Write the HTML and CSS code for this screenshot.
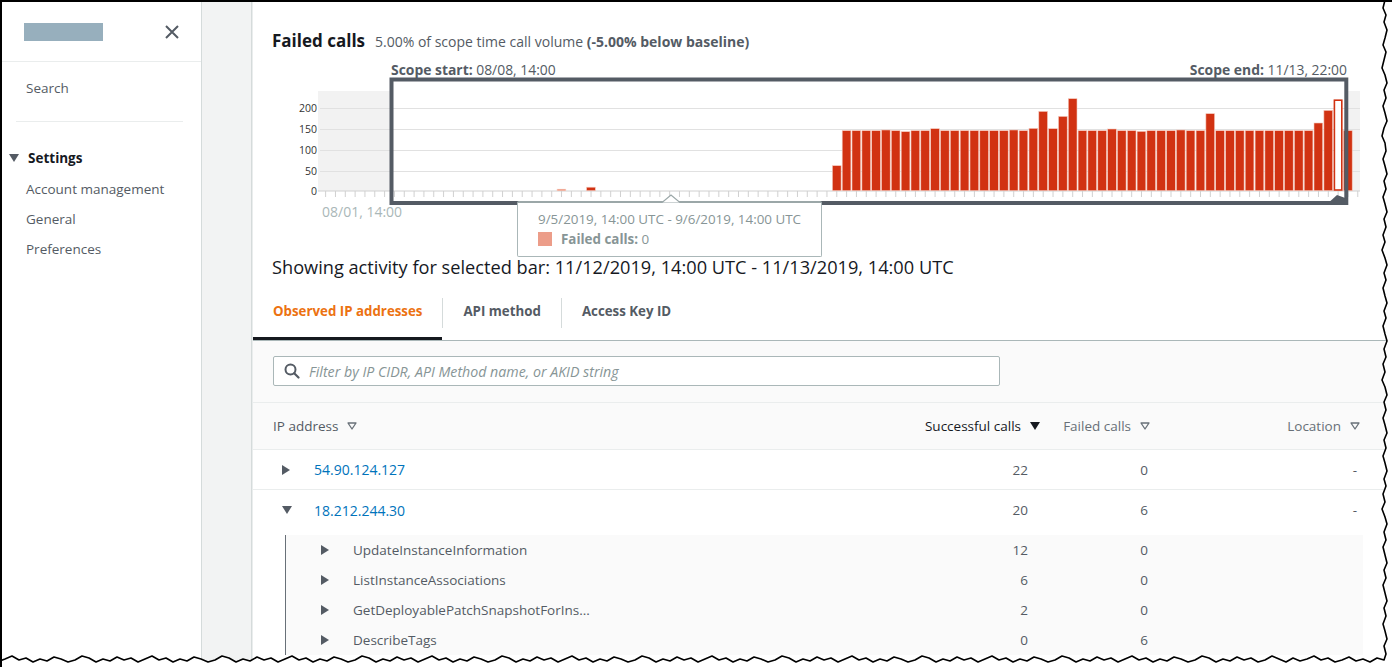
FILE: index.html
```html
<!DOCTYPE html>
<html>
<head>
  <title>Failed calls</title>
  <link rel="stylesheet" href="styles.css">
</head>
<body>
<div class="shot">

  <!-- Navegación lateral -->
  <aside class="sidebar">
    <div class="side-head">
      <span class="logo-ph"></span>
      <svg class="close" width="14" height="14" viewBox="0 0 14 14"><path d="M1 1L13 13M13 1L1 13" stroke="#545b64" stroke-width="2" fill="none"/></svg>
    </div>
    <nav class="side-nav">
      <a class="side-link">Search</a>
      <hr class="side-sep">
      <div class="side-section"><svg class="caret-down" width="10" height="8" viewBox="0 0 10 8"><path d="M0 0H10L5 8Z" fill="#545b64"/></svg>Settings</div>
      <a class="side-link">Account management</a>
      <a class="side-link">General</a>
      <a class="side-link">Preferences</a>
    </nav>
  </aside>
  <div class="rail"></div>

  <main class="main">
    <div class="title-row">
      <h2>Failed calls</h2>
      <span class="sub">5.00% of scope time call volume <b>(-5.00% below baseline)</b></span>
    </div>

    <!-- Gráfico -->
    <div class="chart">
      <svg width="1120" height="205" viewBox="0 0 1120 205">
        <defs>
          <pattern id="ticks" x="321.2" y="191" width="9.83" height="6" patternUnits="userSpaceOnUse">
            <line x1="4.4" y1="0" x2="4.4" y2="6" stroke="#d0d0d0" stroke-width="1"/>
          </pattern>
        </defs>
        <g transform="translate(-272,-51)">
          <rect x="318" y="91" width="1042" height="100" fill="#f2f2f2"/>
          <rect x="391.5" y="79.5" width="954.8" height="123.5" fill="#fff"/>
          <g stroke="#e1e1e1" stroke-width="1">
            <line x1="320" y1="108.5" x2="1360" y2="108.5"/>
            <line x1="320" y1="129.5" x2="1360" y2="129.5"/>
            <line x1="320" y1="150.5" x2="1360" y2="150.5"/>
            <line x1="320" y1="171.5" x2="1360" y2="171.5"/>
          </g>
          <line x1="318" y1="191" x2="1360" y2="191" stroke="#d0d0d0" stroke-width="1"/>
          <rect x="318" y="191" width="1042" height="6" fill="url(#ticks)"/>
          <g class="ylab" text-anchor="end">
            <text x="317" y="112">200</text>
            <text x="317" y="133">150</text>
            <text x="317" y="154">100</text>
            <text x="317" y="175">50</text>
            <text x="317" y="195">0</text>
          </g>
          <text class="xlab" x="322" y="217">08/01, 14:00</text>

          <g fill="#d13212" stroke="#f6c8bd" stroke-width="0.6">
            <rect x="557.1" y="189.2" width="8.7" height="1.5" fill="#e8724f"/>
            <rect x="586.6" y="187.2" width="8.7" height="3.5"/>
            <rect x="832.4" y="165.7" width="8.7" height="25"/>
            <rect x="842.2" y="130.7" width="8.7" height="60"/>
            <rect x="852.0" y="130.7" width="8.7" height="60"/>
            <rect x="861.9" y="130.7" width="8.7" height="60"/>
            <rect x="871.7" y="130.7" width="8.7" height="60"/>
            <rect x="881.5" y="130.0" width="8.7" height="60.7"/>
            <rect x="891.3" y="130.7" width="8.7" height="60"/>
            <rect x="901.2" y="131.7" width="8.7" height="59"/>
            <rect x="911.0" y="130.7" width="8.7" height="60"/>
            <rect x="920.8" y="130.7" width="8.7" height="60"/>
            <rect x="930.7" y="128.7" width="8.7" height="62"/>
            <rect x="940.5" y="130.7" width="8.7" height="60"/>
            <rect x="950.3" y="130.7" width="8.7" height="60"/>
            <rect x="960.2" y="130.7" width="8.7" height="60"/>
            <rect x="970.0" y="130.7" width="8.7" height="60"/>
            <rect x="979.8" y="130.7" width="8.7" height="60"/>
            <rect x="989.6" y="130.7" width="8.7" height="60"/>
            <rect x="999.5" y="130.7" width="8.7" height="60"/>
            <rect x="1009.3" y="130.0" width="8.7" height="60.7"/>
            <rect x="1019.1" y="130.7" width="8.7" height="60"/>
            <rect x="1029.0" y="128.4" width="8.7" height="62.3"/>
            <rect x="1038.8" y="111.4" width="8.7" height="79.3"/>
            <rect x="1048.6" y="128.7" width="8.7" height="62"/>
            <rect x="1058.5" y="116.4" width="8.7" height="74.3"/>
            <rect x="1068.3" y="98.7" width="8.7" height="92"/>
            <rect x="1078.1" y="130.7" width="8.7" height="60"/>
            <rect x="1087.9" y="130.7" width="8.7" height="60"/>
            <rect x="1097.8" y="130.7" width="8.7" height="60"/>
            <rect x="1107.6" y="129.0" width="8.7" height="61.7"/>
            <rect x="1117.4" y="130.7" width="8.7" height="60"/>
            <rect x="1127.3" y="130.7" width="8.7" height="60"/>
            <rect x="1137.1" y="131.4" width="8.7" height="59.3"/>
            <rect x="1146.9" y="130.7" width="8.7" height="60"/>
            <rect x="1156.8" y="130.7" width="8.7" height="60"/>
            <rect x="1166.6" y="130.7" width="8.7" height="60"/>
            <rect x="1176.4" y="130.0" width="8.7" height="60.7"/>
            <rect x="1186.2" y="130.7" width="8.7" height="60"/>
            <rect x="1196.1" y="130.7" width="8.7" height="60"/>
            <rect x="1205.9" y="113.7" width="8.7" height="77"/>
            <rect x="1215.7" y="130.7" width="8.7" height="60"/>
            <rect x="1225.6" y="130.7" width="8.7" height="60"/>
            <rect x="1235.4" y="130.7" width="8.7" height="60"/>
            <rect x="1245.2" y="130.7" width="8.7" height="60"/>
            <rect x="1255.1" y="130.7" width="8.7" height="60"/>
            <rect x="1264.9" y="130.7" width="8.7" height="60"/>
            <rect x="1274.7" y="130.7" width="8.7" height="60"/>
            <rect x="1284.5" y="130.7" width="8.7" height="60"/>
            <rect x="1294.4" y="130.7" width="8.7" height="60"/>
            <rect x="1304.2" y="130.7" width="8.7" height="60"/>
            <rect x="1314.0" y="123.0" width="8.7" height="67.7"/>
            <rect x="1323.9" y="110.4" width="8.7" height="80.3"/>
            <rect x="1343.5" y="130.7" width="8.7" height="60"/>
          </g>
          <rect x="1334.4" y="100.2" width="7.4" height="89.8" fill="#fff" stroke="#d13212" stroke-width="1.6"/>

          <rect x="391.5" y="79.5" width="954.8" height="123.5" fill="none" stroke="#545b64" stroke-width="4"/>
          <polygon points="1326,205 1337,195 1348,199 1348,205" fill="#545b64"/>

          <text class="scope" x="391" y="75"><tspan font-weight="700">Scope start:</tspan> 08/08, 14:00</text>
          <text class="scope" x="1347" y="75" text-anchor="end"><tspan font-weight="700">Scope end:</tspan> 11/13, 22:00</text>
        </g>
      </svg>

      <div class="tooltip">
        <svg class="tip-caret" width="18" height="9" viewBox="0 0 18 9"><path d="M0 8.5L9 1L18 8.5" fill="#fff" stroke="#9ba7a8" stroke-width="1.2"/></svg>
        <div class="tip-range">9/5/2019, 14:00 UTC - 9/6/2019, 14:00 UTC</div>
        <div class="tip-line"><span class="swatch"></span><b>Failed calls:</b>&nbsp;0</div>
      </div>
    </div>

    <div class="selected">Showing activity for selected bar: 11/12/2019, 14:00 UTC - 11/13/2019, 14:00 UTC</div>

    <!-- Pestañas -->
    <div class="tabs">
      <div class="tab active">Observed IP addresses</div>
      <span class="tab-sep"></span>
      <div class="tab">API method</div>
      <span class="tab-sep"></span>
      <div class="tab">Access Key ID</div>
    </div>

    <div class="filter-bar">
      <div class="filter">
        <svg width="16" height="16" viewBox="0 0 16 16"><circle cx="6.5" cy="6.5" r="5" stroke="#545b64" stroke-width="2" fill="none"/><path d="M10.2 10.2L14.5 14.5" stroke="#545b64" stroke-width="2.2" stroke-linecap="round"/></svg>
        <span class="placeholder">Filter by IP CIDR, API Method name, or AKID string</span>
      </div>
    </div>

    <!-- Tabla -->
    <div class="table">
      <div class="row head">
        <div class="cell">IP address <svg class="sort" width="10" height="8" viewBox="0 0 10 8"><path d="M1 1H9L5 7Z" fill="none" stroke="#687078" stroke-width="1.3" stroke-linejoin="round"/></svg></div>
        <div class="cell num sorted">Successful calls <svg class="sort" width="10" height="8" viewBox="0 0 10 8"><path d="M0 0H10L5 8Z" fill="#16191f"/></svg></div>
        <div class="cell num">Failed calls <svg class="sort" width="10" height="8" viewBox="0 0 10 8"><path d="M1 1H9L5 7Z" fill="none" stroke="#687078" stroke-width="1.3" stroke-linejoin="round"/></svg></div>
        <div class="cell num">Location <svg class="sort" width="10" height="8" viewBox="0 0 10 8"><path d="M1 1H9L5 7Z" fill="none" stroke="#687078" stroke-width="1.3" stroke-linejoin="round"/></svg></div>
      </div>
      <div class="row">
        <div class="cell"><span class="exp"><svg width="8" height="10" viewBox="0 0 8 10"><path d="M0 0L8 5L0 10Z" fill="#545b64"/></svg></span><a class="ip">54.90.124.127</a></div>
        <div class="cell num c-succ">22</div>
        <div class="cell num c-fail">0</div>
        <div class="cell num c-loc">-</div>
      </div>
      <div class="row open">
        <div class="cell"><span class="exp"><svg width="10" height="8" viewBox="0 0 10 8"><path d="M0 0H10L5 8Z" fill="#545b64"/></svg></span><a class="ip">18.212.244.30</a></div>
        <div class="cell num c-succ">20</div>
        <div class="cell num c-fail">6</div>
        <div class="cell num c-loc">-</div>
      </div>
      <div class="children">
        <div class="row child">
          <div class="cell"><span class="exp"><svg width="8" height="10" viewBox="0 0 8 10"><path d="M0 0L8 5L0 10Z" fill="#545b64"/></svg></span>UpdateInstanceInformation</div>
          <div class="cell num c-succ">12</div>
          <div class="cell num c-fail">0</div>
          <div class="cell num c-loc"></div>
        </div>
        <div class="row child">
          <div class="cell"><span class="exp"><svg width="8" height="10" viewBox="0 0 8 10"><path d="M0 0L8 5L0 10Z" fill="#545b64"/></svg></span>ListInstanceAssociations</div>
          <div class="cell num c-succ">6</div>
          <div class="cell num c-fail">0</div>
          <div class="cell num c-loc"></div>
        </div>
        <div class="row child">
          <div class="cell"><span class="exp"><svg width="8" height="10" viewBox="0 0 8 10"><path d="M0 0L8 5L0 10Z" fill="#545b64"/></svg></span>GetDeployablePatchSnapshotForIns...</div>
          <div class="cell num c-succ">2</div>
          <div class="cell num c-fail">0</div>
          <div class="cell num c-loc"></div>
        </div>
        <div class="row child">
          <div class="cell"><span class="exp"><svg width="8" height="10" viewBox="0 0 8 10"><path d="M0 0L8 5L0 10Z" fill="#545b64"/></svg></span>DescribeTags</div>
          <div class="cell num c-succ">0</div>
          <div class="cell num c-fail">6</div>
          <div class="cell num c-loc"></div>
        </div>
      </div>
    </div>
  </main>

  <!-- Borde rasgado de la captura -->
  <svg class="torn" width="1392" height="667" viewBox="0 0 1392 667">
    <path fill="#fff" d="M1385,0 L1383,8 1386,15 1384,22 1387,30 1385,38 1383,45 1386,52 1384,60 1382,68 1385,75 1387,83 1384,90 1386,98 1383,106 1385,113 1387,121 1384,128 1382,136 1385,143 1386,151 1383,159 1385,166 1387,174 1384,181 1386,189 1383,197 1385,204 1387,212 1384,219 1386,227 1383,235 1385,242 1382,250 1385,258 1387,265 1384,273 1386,280 1383,288 1385,296 1387,303 1384,311 1386,318 1383,326 1385,334 1387,341 1384,349 1386,357 1383,364 1385,372 1382,380 1385,387 1387,395 1384,402 1386,410 1383,418 1385,425 1387,433 1384,440 1386,448 1383,456 1385,463 1387,471 1384,479 1386,486 1383,494 1385,502 1382,509 1385,517 1387,524 1384,532 1386,540 1383,547 1385,555 1387,563 1384,570 1386,578 1383,585 1385,593 1387,601 1384,608 1386,616 1383,624 1385,631 1387,639 1384,646 1386,654 1384,660 1377,658 1370,662 1363,659 1356,661 1349,657 1342,660 1335,662 1328,658 1321,660 1314,656 1307,659 1300,661 1293,658 1286,662 1279,659 1272,656 1265,660 1258,662 1251,658 1244,660 1237,657 1230,661 1223,659 1216,662 1209,658 1202,656 1195,660 1188,662 1181,659 1174,657 1167,661 1160,659 1153,662 1146,658 1139,660 1132,656 1125,659 1118,662 1111,658 1104,660 1097,657 1090,661 1083,659 1076,662 1069,658 1062,656 1055,660 1048,662 1041,659 1034,657 1027,661 1020,659 1013,662 1006,658 999,660 992,656 985,659 978,662 971,658 964,660 957,657 950,661 943,659 936,662 929,658 922,656 915,660 908,662 901,659 894,657 887,661 880,659 873,662 866,658 859,660 852,656 845,659 838,662 831,658 824,660 817,657 810,661 803,659 796,662 789,658 782,656 775,660 768,662 761,659 754,657 747,661 740,659 733,662 726,658 719,660 712,656 705,659 698,662 691,658 684,660 677,657 670,661 663,659 656,662 649,658 642,656 635,660 628,662 621,659 614,657 607,661 600,659 593,662 586,658 579,660 572,656 565,659 558,662 551,658 544,660 537,657 530,661 523,659 516,662 509,658 502,656 495,660 488,662 481,659 474,657 467,661 460,659 453,662 446,658 439,660 432,656 425,659 418,662 411,658 404,660 397,657 390,661 383,659 376,662 369,658 362,656 355,660 348,662 341,659 334,657 327,661 320,659 313,662 306,658 299,660 292,656 285,659 278,662 271,658 264,660 257,657 250,661 243,659 236,662 229,658 222,656 215,660 208,662 201,659 194,657 187,661 180,659 173,662 166,658 159,660 152,656 145,659 138,662 131,658 124,660 117,657 110,661 103,659 96,662 89,658 82,656 75,660 68,662 61,659 54,657 47,661 40,659 33,662 26,658 19,660 12,656 5,659 0,661 L0,667 L1392,667 L1392,0 Z"/>
    <path fill="none" stroke="#000" stroke-width="1.6" stroke-linejoin="round" d="M1385,0 L1383,8 1386,15 1384,22 1387,30 1385,38 1383,45 1386,52 1384,60 1382,68 1385,75 1387,83 1384,90 1386,98 1383,106 1385,113 1387,121 1384,128 1382,136 1385,143 1386,151 1383,159 1385,166 1387,174 1384,181 1386,189 1383,197 1385,204 1387,212 1384,219 1386,227 1383,235 1385,242 1382,250 1385,258 1387,265 1384,273 1386,280 1383,288 1385,296 1387,303 1384,311 1386,318 1383,326 1385,334 1387,341 1384,349 1386,357 1383,364 1385,372 1382,380 1385,387 1387,395 1384,402 1386,410 1383,418 1385,425 1387,433 1384,440 1386,448 1383,456 1385,463 1387,471 1384,479 1386,486 1383,494 1385,502 1382,509 1385,517 1387,524 1384,532 1386,540 1383,547 1385,555 1387,563 1384,570 1386,578 1383,585 1385,593 1387,601 1384,608 1386,616 1383,624 1385,631 1387,639 1384,646 1386,654 1384,660 1377,658 1370,662 1363,659 1356,661 1349,657 1342,660 1335,662 1328,658 1321,660 1314,656 1307,659 1300,661 1293,658 1286,662 1279,659 1272,656 1265,660 1258,662 1251,658 1244,660 1237,657 1230,661 1223,659 1216,662 1209,658 1202,656 1195,660 1188,662 1181,659 1174,657 1167,661 1160,659 1153,662 1146,658 1139,660 1132,656 1125,659 1118,662 1111,658 1104,660 1097,657 1090,661 1083,659 1076,662 1069,658 1062,656 1055,660 1048,662 1041,659 1034,657 1027,661 1020,659 1013,662 1006,658 999,660 992,656 985,659 978,662 971,658 964,660 957,657 950,661 943,659 936,662 929,658 922,656 915,660 908,662 901,659 894,657 887,661 880,659 873,662 866,658 859,660 852,656 845,659 838,662 831,658 824,660 817,657 810,661 803,659 796,662 789,658 782,656 775,660 768,662 761,659 754,657 747,661 740,659 733,662 726,658 719,660 712,656 705,659 698,662 691,658 684,660 677,657 670,661 663,659 656,662 649,658 642,656 635,660 628,662 621,659 614,657 607,661 600,659 593,662 586,658 579,660 572,656 565,659 558,662 551,658 544,660 537,657 530,661 523,659 516,662 509,658 502,656 495,660 488,662 481,659 474,657 467,661 460,659 453,662 446,658 439,660 432,656 425,659 418,662 411,658 404,660 397,657 390,661 383,659 376,662 369,658 362,656 355,660 348,662 341,659 334,657 327,661 320,659 313,662 306,658 299,660 292,656 285,659 278,662 271,658 264,660 257,657 250,661 243,659 236,662 229,658 222,656 215,660 208,662 201,659 194,657 187,661 180,659 173,662 166,658 159,660 152,656 145,659 138,662 131,658 124,660 117,657 110,661 103,659 96,662 89,658 82,656 75,660 68,662 61,659 54,657 47,661 40,659 33,662 26,658 19,660 12,656 5,659 0,661"/>
  </svg>
</div>
</body>
</html>
```

FILE: styles.css
```css
body { margin: 0; background: #fff; font-family: "Open Sans", "Noto Sans", sans-serif; font-size: 13.5px; color: #16191f; }
.shot { position: relative; display: flex; width: 1392px; height: 667px; overflow: hidden; box-sizing: border-box; border-top: 2px solid #000; border-left: 2px solid #000; }

/* barra lateral */
.sidebar { width: 199px; flex: none; border-right: 1px solid #d5dbdb; }
.side-head { height: 59px; border-bottom: 1px solid #eaeded; display: flex; align-items: center; justify-content: space-between; padding: 0 22px 0 22px; }
.logo-ph { width: 79px; height: 18px; background: #97afbd; }
.side-nav { padding-top: 16px; }
.side-link { display: block; padding-left: 24px; line-height: 20px; margin-bottom: 10px; color: #545b64; }
.side-sep { border: 0; border-top: 1px solid #eaeded; margin: 23px 18px 26px 14px; }
.side-section { display: flex; align-items: center; line-height: 20px; padding-left: 7px; font-weight: 700; color: #16191f; margin-bottom: 11px; }
.caret-down { margin-right: 9px; }
.rail { width: 49px; flex: none; background: #f2f3f3; border-right: 1px solid #d5dbdb; }

/* contenido */
.main { flex: 1; border-left: 1px solid #eaeded; padding-top: 29px; min-width: 0; }
.title-row { display: flex; align-items: baseline; gap: 10px; padding-left: 19px; height: 20px; line-height: 20px; }
.title-row h2 { margin: 0; font-size: 17px; font-weight: 700; }
.sub { color: #545b64; font-size: 14px; }
.sub b { color: #545b64; }
.chart { position: relative; height: 205px; padding-left: 19px; }
.chart svg { display: block; }
.ylab text { font-size: 10.5px; fill: #333; font-family: "Open Sans", sans-serif; }
.xlab { font-size: 14px; fill: #aab7b8; font-family: "Open Sans", sans-serif; }
.scope { font-size: 13.9px; fill: #545b64; font-family: "Open Sans", sans-serif; }

.tooltip { position: absolute; left: 264px; top: 150px; width: 305px; height: 56px; background: #fff; border: 1px solid #aab7b8; border-top: 2px solid #9ba7a8; border-radius: 2px; padding-left: 20px; box-sizing: border-box; color: #879596; font-size: 13.4px; }
.tip-caret { position: absolute; left: 144px; top: -9px; }
.tip-range { margin-top: 6px; line-height: 20px; }
.tip-line { display: flex; align-items: center; line-height: 20px; }
.swatch { width: 14px; height: 14px; background: #ec9d89; margin-right: 9px; }

.selected { font-size: 18.2px; line-height: 22px; padding-left: 19px; }

.tabs { display: flex; margin-top: 19px; height: 43px; border-bottom: 1px solid #aab7b8; }
.tab { padding: 4px 20px 0; line-height: 20px; font-weight: 700; font-size: 13.3px; color: #545b64; box-sizing: border-box; height: 43px; }
.tab.active { color: #ec7211; border-bottom: 3px solid #16191f; }
.tab-sep { width: 1px; height: 30px; margin-top: 1px; background: #d5dbdb; }

.filter-bar { background: #fafafa; padding: 15px 0 16px 20px; }
.filter { width: 727px; height: 30px; box-sizing: border-box; border: 1px solid #aab7b8; border-radius: 2px; background: #fff; display: flex; align-items: center; padding-left: 10px; gap: 9px; }
.placeholder { font-style: italic; color: #879596; font-size: 14.2px; }

.row { display: grid; grid-template-columns: 1fr 140px 110px 210px; padding: 0 32px 0 20px; height: 40px; align-items: center; border-bottom: 1px solid #eaeded; box-sizing: border-box; }
.row.head { background: #fafafa; height: 48px; border-top: 1px solid #eaeded; }
.row.head .cell { color: #687078; }
.row.head .cell:first-child { color: #545b64; }
.row.head .cell.sorted { color: #16191f; }
.sort { margin-left: 9px; }
.row.open { border-bottom: 0; }
.cell { display: flex; align-items: center; white-space: nowrap; color: #545b64; }
.cell.num { justify-content: flex-end; }
.c-succ { padding-right: 12px; }
.c-fail { padding-right: 2px; }
.c-loc { padding-right: 3px; }
.exp { display: flex; align-items: center; width: 41px; padding-left: 9px; box-sizing: border-box; }
.ip { color: #0073bb; font-size: 14px; }
.children { margin: 5px 29px 0 32px; background: #fafafa; border-left: 1px solid #687078; }
.row.child { height: 30px; border-bottom: 0; padding: 0 3px 0 0; }
.row.child .exp { width: 67px; padding-left: 35px; }

.torn { position: absolute; left: -2px; top: -2px; }
```
